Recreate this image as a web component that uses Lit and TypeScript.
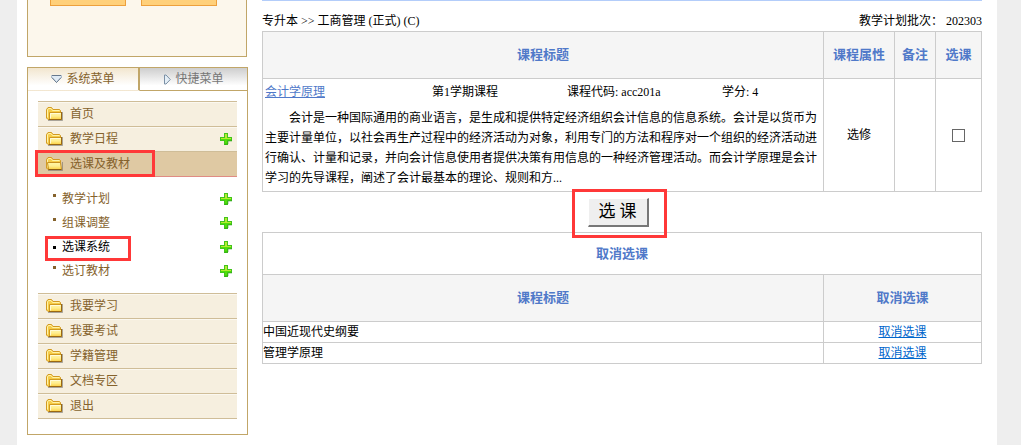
import { LitElement, html, css, svg } from "lit";
import { customElement, property, state } from "lit/decorators.js";
import { classMap } from "lit/directives/class-map.js";

const folder = (open: boolean) => html`<svg class="folder" viewBox="0 0 17 14" width="17" height="14" aria-hidden="true">
  <defs>
    <linearGradient id="f" x1="0" y1="0" x2="0" y2="1">
      <stop offset="0" stop-color="#fff6a8"></stop>
      <stop offset=".5" stop-color="#ffee90"></stop>
      <stop offset="1" stop-color="#fbd040"></stop>
    </linearGradient>
  </defs>
  <path d="M2 13.500h14.500V5" fill="none" stroke="#77716a" stroke-opacity=".6"></path>
  <path d="M.5 11V2.500L2 .5h3.500l1.500 2h6.500l1 1v9H2z" fill="#f6cc48" stroke="#d29a22"></path>
  <path d="M1.500 10.500V3l1-1.500h2.500l1.500 2h7" fill="none" stroke="#fff3a8"></path>
  ${open
    ? svg`<path d="M2.500 12.500L1.500 5.500h13l1 7z" fill="url(#f)" stroke="#c89020"></path>
          <path d="M2.500 12.500h13" stroke="#8c5c10"></path>`
    : svg`<path d="M3.500 12.500v-7h12v7z" fill="url(#f)" stroke="#d09a20"></path>
          <path d="M3 12.500h12.500V5" fill="none" stroke="#9a6812"></path>
          <path d="M4.500 11.500v-5h10" fill="none" stroke="#fffbd8"></path>`}
</svg>`;

const plus = html`<svg class="plus" viewBox="0 0 12 12" width="12" height="12" aria-hidden="true">
  <path d="M4 0h4v4h4v4H8v4H4V8H0V4h4z" fill="#42c41c"></path>
  <path d="M5 1h2v4h4v1H1V5h4z" fill="#b4ec30"></path>
  <path d="M1 6h10v1H7v4H5V7H1z" fill="#4fe008"></path>
  <path d="M5 12V11h3V8h4V7" fill="none" stroke="#26960f" stroke-opacity=".5"></path>
</svg>`;

interface Item {
  label: string;
  plus?: boolean;
  open?: boolean;
  children?: string[];
}

const MENU: Item[] = [
  { label: "首页" },
  { label: "教学日程", plus: true },
  { label: "选课及教材", open: true, children: ["教学计划", "组课调整", "选课系统", "选订教材"] },
  { label: "我要学习" },
  { label: "我要考试" },
  { label: "学籍管理" },
  { label: "文档专区" },
  { label: "退出" },
];

@customElement("side-menu")
export class SideMenu extends LitElement {
  @property() current = "选课系统";
  @state() private tab = 0;

  static styles = css`
    :host { display: block; color: #85622c; }
    .promo {
      display: flex; gap: 15px; height: 57px; padding: 0 22px; box-sizing: border-box;
      border: 1px solid #c1a668; border-top: 0; background: #fcf7ec; margin-bottom: 10px;
    }
    .promo button {
      width: 76px; height: 6px; padding: 0; border: 1px solid #eda03c; border-top: 0;
      background: #ffd07a;
    }
    .panel { border: 1px solid #c1a668; margin-right: -1px; padding-bottom: 15px; }
    .tabs { display: grid; grid-template-columns: 112fr 107fr; height: 23px; }
    .tab {
      display: flex; align-items: center; justify-content: center; gap: 4px;
      font: inherit; color: #777; padding: 0; border: 0;
      border-bottom: 1px solid #c1a668;
      background: linear-gradient(#cecece, #fff 80%);
    }
    .tab.on {
      color: #85622c; border-bottom-color: transparent; border-right: 2px solid #c1a668;
      background: linear-gradient(#f2e6cf, #fff 80%);
    }
    ul { list-style: none; margin: 0; padding: 0; }
    .main { margin: 10px 10px 0; border-bottom: 1px solid #cfbd98; }
    .row {
      display: flex; align-items: center; height: 24px; padding: 0 5px 0 8px;
      border-top: 1px solid #cfbd98; background: #f6efdf; box-shadow: inset 0 1px #fbf8f0;
      color: inherit; text-decoration: none;
    }
    .row.open { background: #dfc9a3; box-shadow: none; border-bottom: 1px solid #e08c84; }
    .label { flex: 1; margin-left: 7px; }
    .sub { padding: 10px 0; }
    .link {
      display: flex; align-items: center; height: 24px; padding: 0 5px 0 15px;
      color: inherit; text-decoration: none;
    }
    .dot { width: 3px; height: 3px; background: currentColor; margin-bottom: 8px; }
    .link.on { color: #000; }
    .link.on .dot { margin-bottom: 0; }
    .text { flex: 1; margin-left: 6px; }
    .mark { position: relative; }
    .mark::after {
      content: ""; position: absolute; border: 3px solid #ff3838; pointer-events: none;
    }
    .row.mark::after { left: -3px; top: -2px; width: 114px; height: 21px; }
    .link.mark::after { left: 7px; top: 1px; width: 80px; height: 19px; }
    svg { flex: none; }
  `;

  render() {
    return html`
      <div class="promo"><button aria-label="登录"></button><button aria-label="重置"></button></div>
      <div class="panel">
        <div class="tabs">
          <button class=${classMap({ tab: true, on: this.tab === 0 })} @click=${() => (this.tab = 0)}>
            <svg width="11" height="10" viewBox="0 0 11 10"><path d="M.5 1.500h10v2L5.500 8.500.5 3.500z" fill="#e0ebf5" stroke="#aebccb"></path><path d="M1 1.500h9M1 3.500l4.500 5 4.500-5" fill="none" stroke="#66788c"></path></svg>
            系统菜单
          </button>
          <button class=${classMap({ tab: true, on: this.tab === 1 })} @click=${() => (this.tab = 1)}>
            <svg width="8" height="11" viewBox="0 0 8 11"><path d="M1.500 1h1.500L7.300 5.500 3 10H1.500z" fill="#e4eef6" stroke="#7b90a6"></path></svg>
            快捷菜单
          </button>
        </div>
        <ul class="main">
          ${MENU.map((m) => html`<li>
            <a href="#" class=${classMap({ row: true, open: !!m.open, mark: !!m.open })}>
              ${folder(!!m.open)}<span class="label">${m.label}</span>${m.plus ? plus : ""}
            </a>
            ${m.children
              ? html`<ul class="sub">
                  ${m.children.map((c) => html`<li>
                    <a href="#" class=${classMap({ link: true, on: c === this.current, mark: c === this.current })}>
                      <span class="dot"></span><span class="text">${c}</span>${plus}
                    </a>
                  </li>`)}
                </ul>`
              : ""}
          </li>`)}
        </ul>
      </div>`;
  }
}

@customElement("app-root")
export class AppRoot extends LitElement {
  static styles = css`
    :host {
      display: block; min-height: 100vh; box-sizing: border-box; padding: 0 24px 0 17px;
      background: #eee; color: #000;
      font: 12px/16px "Liberation Serif", "Noto Sans CJK SC", sans-serif;
    }
    .page {
      display: flex; gap: 15px; align-items: flex-start; background: #fff;
      min-height: 100vh; box-sizing: border-box; padding: 0 15px 0 10px;
    }
    side-menu { flex: 0 0 220px; }
    main { flex: 1; min-width: 0; border-top: 1px solid #b3cdfa; }
    .head { display: flex; justify-content: space-between; padding: 12px 0 2px; }
    table { width: 100%; border-collapse: collapse; table-layout: fixed; }
    th, td { border: 1px solid #ccc; padding: 0; text-align: center; }
    th { height: 46px; font-size: 13px; color: #5079c9; background: #f5f5f5; }
    .kind { width: 71px; }
    .note { width: 41px; }
    .pick { width: 46px; }
    .cancel { width: 158px; }
    td.course { text-align: left; padding: 3px 4px 3px 2px; }
    .facts { display: grid; grid-template-columns: 167px 135px 155px 1fr; line-height: 20px; }
    .facts a { color: #5079c9; }
    .about { margin: 6px 0 0; line-height: 20px; text-indent: 24px; }
    input { display: block; width: 13px; height: 13px; margin: 0 auto; appearance: none; border: 1px solid #666; background: #fff; }
    .action { display: flex; justify-content: center; height: 40px; padding-right: 6px; }
    .frame { border: 3px solid #ff3838; margin: -3px 0; padding: 6px 15px 8px 13px; box-sizing: border-box; height: 49px; position: relative; }
    .frame button {
      display: block; width: 61px; height: 29px; padding: 0; font: 17px/20px "Liberation Serif", "Noto Sans CJK SC", sans-serif;
      color: #000; background: #efefef; border: 1px solid #fff; border-right: 2px solid #777; border-bottom: 2px solid #777;
    }
    th.title { height: 41px; background: #fff; }
    td.name { text-align: left; }
    .list td { height: 20px; }
    .list a { color: #0066cc; }
  `;

  render() {
    return html`<div class="page">
      <side-menu></side-menu>
      <main>
        <div class="head"><span>专升本 &gt;&gt; 工商管理 (正式) (C)</span><span>教学计划批次： 202303</span></div>
        <table>
          <colgroup><col /><col class="kind" /><col class="note" /><col class="pick" /></colgroup>
          <tr><th>课程标题</th><th>课程属性</th><th>备注</th><th>选课</th></tr>
          <tr>
            <td class="course">
              <div class="facts"><a href="#">会计学原理</a><span>第1学期课程</span><span>课程代码: acc201a</span><span>学分: 4</span></div>
              <p class="about">会计是一种国际通用的商业语言，是生成和提供特定经济组织会计信息的信息系统。会计是以货币为主要计量单位，以社会再生产过程中的经济活动为对象，利用专门的方法和程序对一个组织的经济活动进行确认、计量和记录，并向会计信息使用者提供决策有用信息的一种经济管理活动。而会计学原理是会计学习的先导课程，阐述了会计最基本的理论、规则和方...</p>
            </td>
            <td>选修</td><td></td><td><input type="checkbox" aria-label="选课" /></td>
          </tr>
        </table>
        <div class="action"><div class="frame"><button>选 课</button></div></div>
        <table class="list">
          <colgroup><col /><col class="cancel" /></colgroup>
          <tr><th class="title" colspan="2">取消选课</th></tr>
          <tr><th>课程标题</th><th>取消选课</th></tr>
          ${["中国近现代史纲要", "管理学原理"].map((n) => html`<tr><td class="name">${n}</td><td><a href="#">取消选课</a></td></tr>`)}
        </table>
      </main>
    </div>`;
  }
}
